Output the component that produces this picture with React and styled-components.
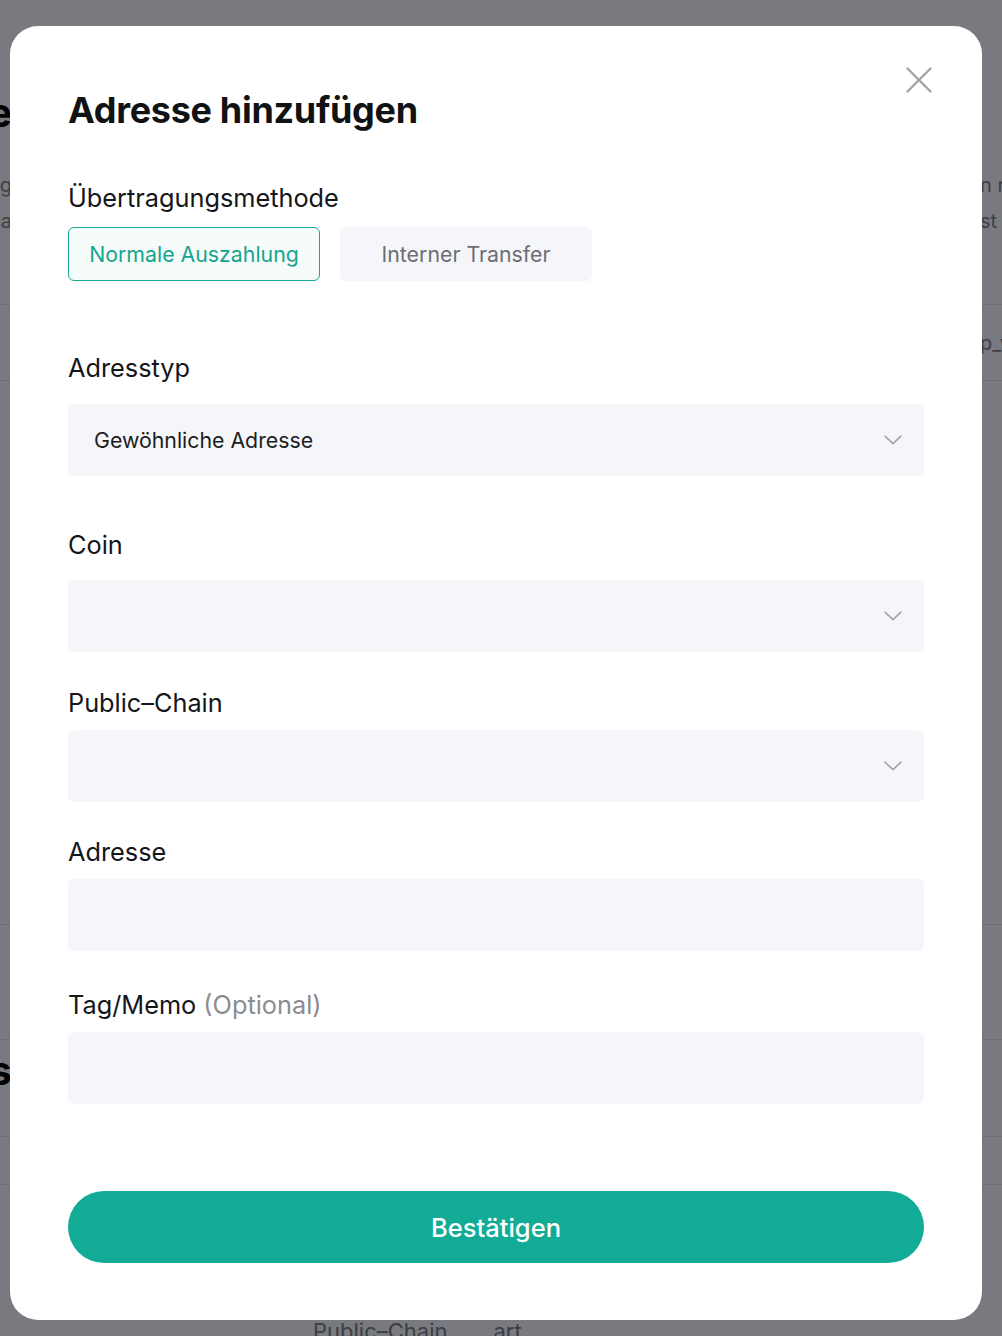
import React, { useState } from 'react';
import styled, { createGlobalStyle } from 'styled-components';

const GlobalStyle = createGlobalStyle`
  html, body {
    margin: 0;
    padding: 0;
    background: #fdfdfe;
  }
  * {
    box-sizing: border-box;
  }
`;

const Page = styled.div`
  position: relative;
  width: 1002px;
  height: 1336px;
  overflow: hidden;
  font-family: Inter, "Noto Sans", sans-serif;
  color: #111;
`;

/* page behind the modal, only its edges show */
const BackRow = styled.div`
  display: flex;
  justify-content: space-between;
  align-items: center;
  height: ${(p) => p.$h}px;
  border-bottom: ${(p) => (p.$line ? '1px solid #e4e5e8' : 'none')};
`;

const LeftEdge = styled.div`
  width: 12px;
  display: flex;
  justify-content: flex-end;
  white-space: nowrap;
  font-size: ${(p) => p.$size || 20}px;
  font-weight: ${(p) => (p.$bold ? 700 : 400)};
  color: ${(p) => (p.$bold ? '#000' : '#7b7d83')};
`;

const RightEdge = styled.div`
  width: 22px;
  display: flex;
  justify-content: flex-start;
  white-space: nowrap;
  font-size: 20px;
  color: #7b7d83;
`;

const BottomHead = styled.div`
  display: flex;
  gap: 46px;
  padding-left: 313px;
  font-size: 22px;
  color: #7b7d83;
  line-height: 24px;
`;

const Overlay = styled.div`
  position: absolute;
  inset: 0;
  background: rgba(4, 6, 14, 0.53);
  display: flex;
  justify-content: flex-start;
  padding: 26px 0 0 10px;
`;

const Modal = styled.div`
  position: relative;
  width: 972px;
  height: 1294px;
  background: #fff;
  border-radius: 28px;
  padding: 62px 58px 0 58px;
  display: flex;
  flex-direction: column;
`;

const CloseButton = styled.button`
  position: absolute;
  top: 41px;
  right: 50px;
  width: 26px;
  height: 26px;
  padding: 0;
  border: none;
  background: none;
  cursor: pointer;
  display: flex;
`;

const Title = styled.h2`
  margin: 0;
  font-size: 36px;
  line-height: 44px;
  font-weight: 700;
  color: #111214;
  letter-spacing: -0.3px;
`;

const Label = styled.div`
  font-size: 25.3px;
  line-height: 32px;
  color: #15161a;
  margin-top: ${(p) => p.$top}px;
  margin-bottom: ${(p) => p.$bottom}px;
`;

const Muted = styled.span`
  color: #8b8c91;
`;

const Tabs = styled.div`
  display: flex;
  gap: 20px;
`;

const Tab = styled.button`
  width: 252px;
  height: 54px;
  border-radius: 6px;
  font-family: inherit;
  font-size: 21.3px;
  cursor: pointer;
  border: 1px solid ${(p) => (p.$active ? '#17a992' : '#f5f6f9')};
  background: ${(p) => (p.$active ? '#f5fcfa' : '#f5f6f9')};
  color: ${(p) => (p.$active ? '#15a58f' : '#6c6d75')};
`;

const Field = styled.div`
  height: 72px;
  border-radius: 6px;
  background: #f5f6fa;
  display: flex;
  align-items: center;
  justify-content: space-between;
  padding: 0 22px 0 26px;
  font-size: 21.3px;
  color: #1c1d21;
`;

const Submit = styled.button`
  margin-top: 87px;
  height: 72px;
  border: none;
  border-radius: 36px;
  background: #12ac96;
  color: #fff;
  font-family: inherit;
  font-size: 25.5px;
  font-weight: 500;
  cursor: pointer;
`;

const Chevron = () => (
  <svg width="18" height="10" viewBox="0 0 18 10" fill="none">
    <path d="M1 1.2 9 8.6 17 1.2" stroke="#a3a4a9" strokeWidth="1.6" strokeLinecap="round" strokeLinejoin="round" />
  </svg>
);

const CloseIcon = () => (
  <svg width="26" height="26" viewBox="0 0 26 26" fill="none">
    <path d="M1.5 1.5 24.5 24.5M24.5 1.5 1.5 24.5" stroke="#a3a4a8" strokeWidth="2.4" strokeLinecap="round" />
  </svg>
);

const App = () => {
  const [method, setMethod] = useState('normal');

  return (
    <Page>
      <GlobalStyle />
      <BackRow $h={82} />
      <BackRow $h={60}>
        <LeftEdge $bold $size={40}>Adressverwaltung Liste</LeftEdge>
      </BackRow>
      <BackRow $h={25} />
      <BackRow $h={36}>
        <LeftEdge>Auszahlung</LeftEdge>
        <RightEdge>n r</RightEdge>
      </BackRow>
      <BackRow $h={36}>
        <LeftEdge>Adressa</LeftEdge>
        <RightEdge>st</RightEdge>
      </BackRow>
      <BackRow $h={66} $line />
      <BackRow $h={76} $line>
        <LeftEdge />
        <RightEdge>p_v</RightEdge>
      </BackRow>
      <BackRow $h={544} $line />
      <BackRow $h={115} $line />
      <BackRow $h={60}>
        <LeftEdge $bold $size={40}>Adresses</LeftEdge>
      </BackRow>
      <BackRow $h={37} $line />
      <BackRow $h={48} $line />
      <BackRow $h={134} />
      <BottomHead>
        <span>Public–Chain</span>
        <span>art</span>
      </BottomHead>

      <Overlay>
        <Modal>
          <CloseButton aria-label="Schließen">
            <CloseIcon />
          </CloseButton>
          <Title>Adresse hinzufügen</Title>

          <Label $top={50} $bottom={13}>Übertragungsmethode</Label>
          <Tabs>
            <Tab $active={method === 'normal'} onClick={() => setMethod('normal')}>
              Normale Auszahlung
            </Tab>
            <Tab $active={method === 'intern'} onClick={() => setMethod('intern')}>
              Interner Transfer
            </Tab>
          </Tabs>

          <Label $top={71} $bottom={20}>Adresstyp</Label>
          <Field>
            <span>Gewöhnliche Adresse</span>
            <Chevron />
          </Field>

          <Label $top={53} $bottom={19}>Coin</Label>
          <Field>
            <span />
            <Chevron />
          </Field>

          <Label $top={35} $bottom={11}>Public–Chain</Label>
          <Field>
            <span />
            <Chevron />
          </Field>

          <Label $top={34} $bottom={11}>Adresse</Label>
          <Field />

          <Label $top={38} $bottom={11}>
            Tag/Memo <Muted>(Optional)</Muted>
          </Label>
          <Field />

          <Submit>Bestätigen</Submit>
        </Modal>
      </Overlay>
    </Page>
  );
};

export default App;
